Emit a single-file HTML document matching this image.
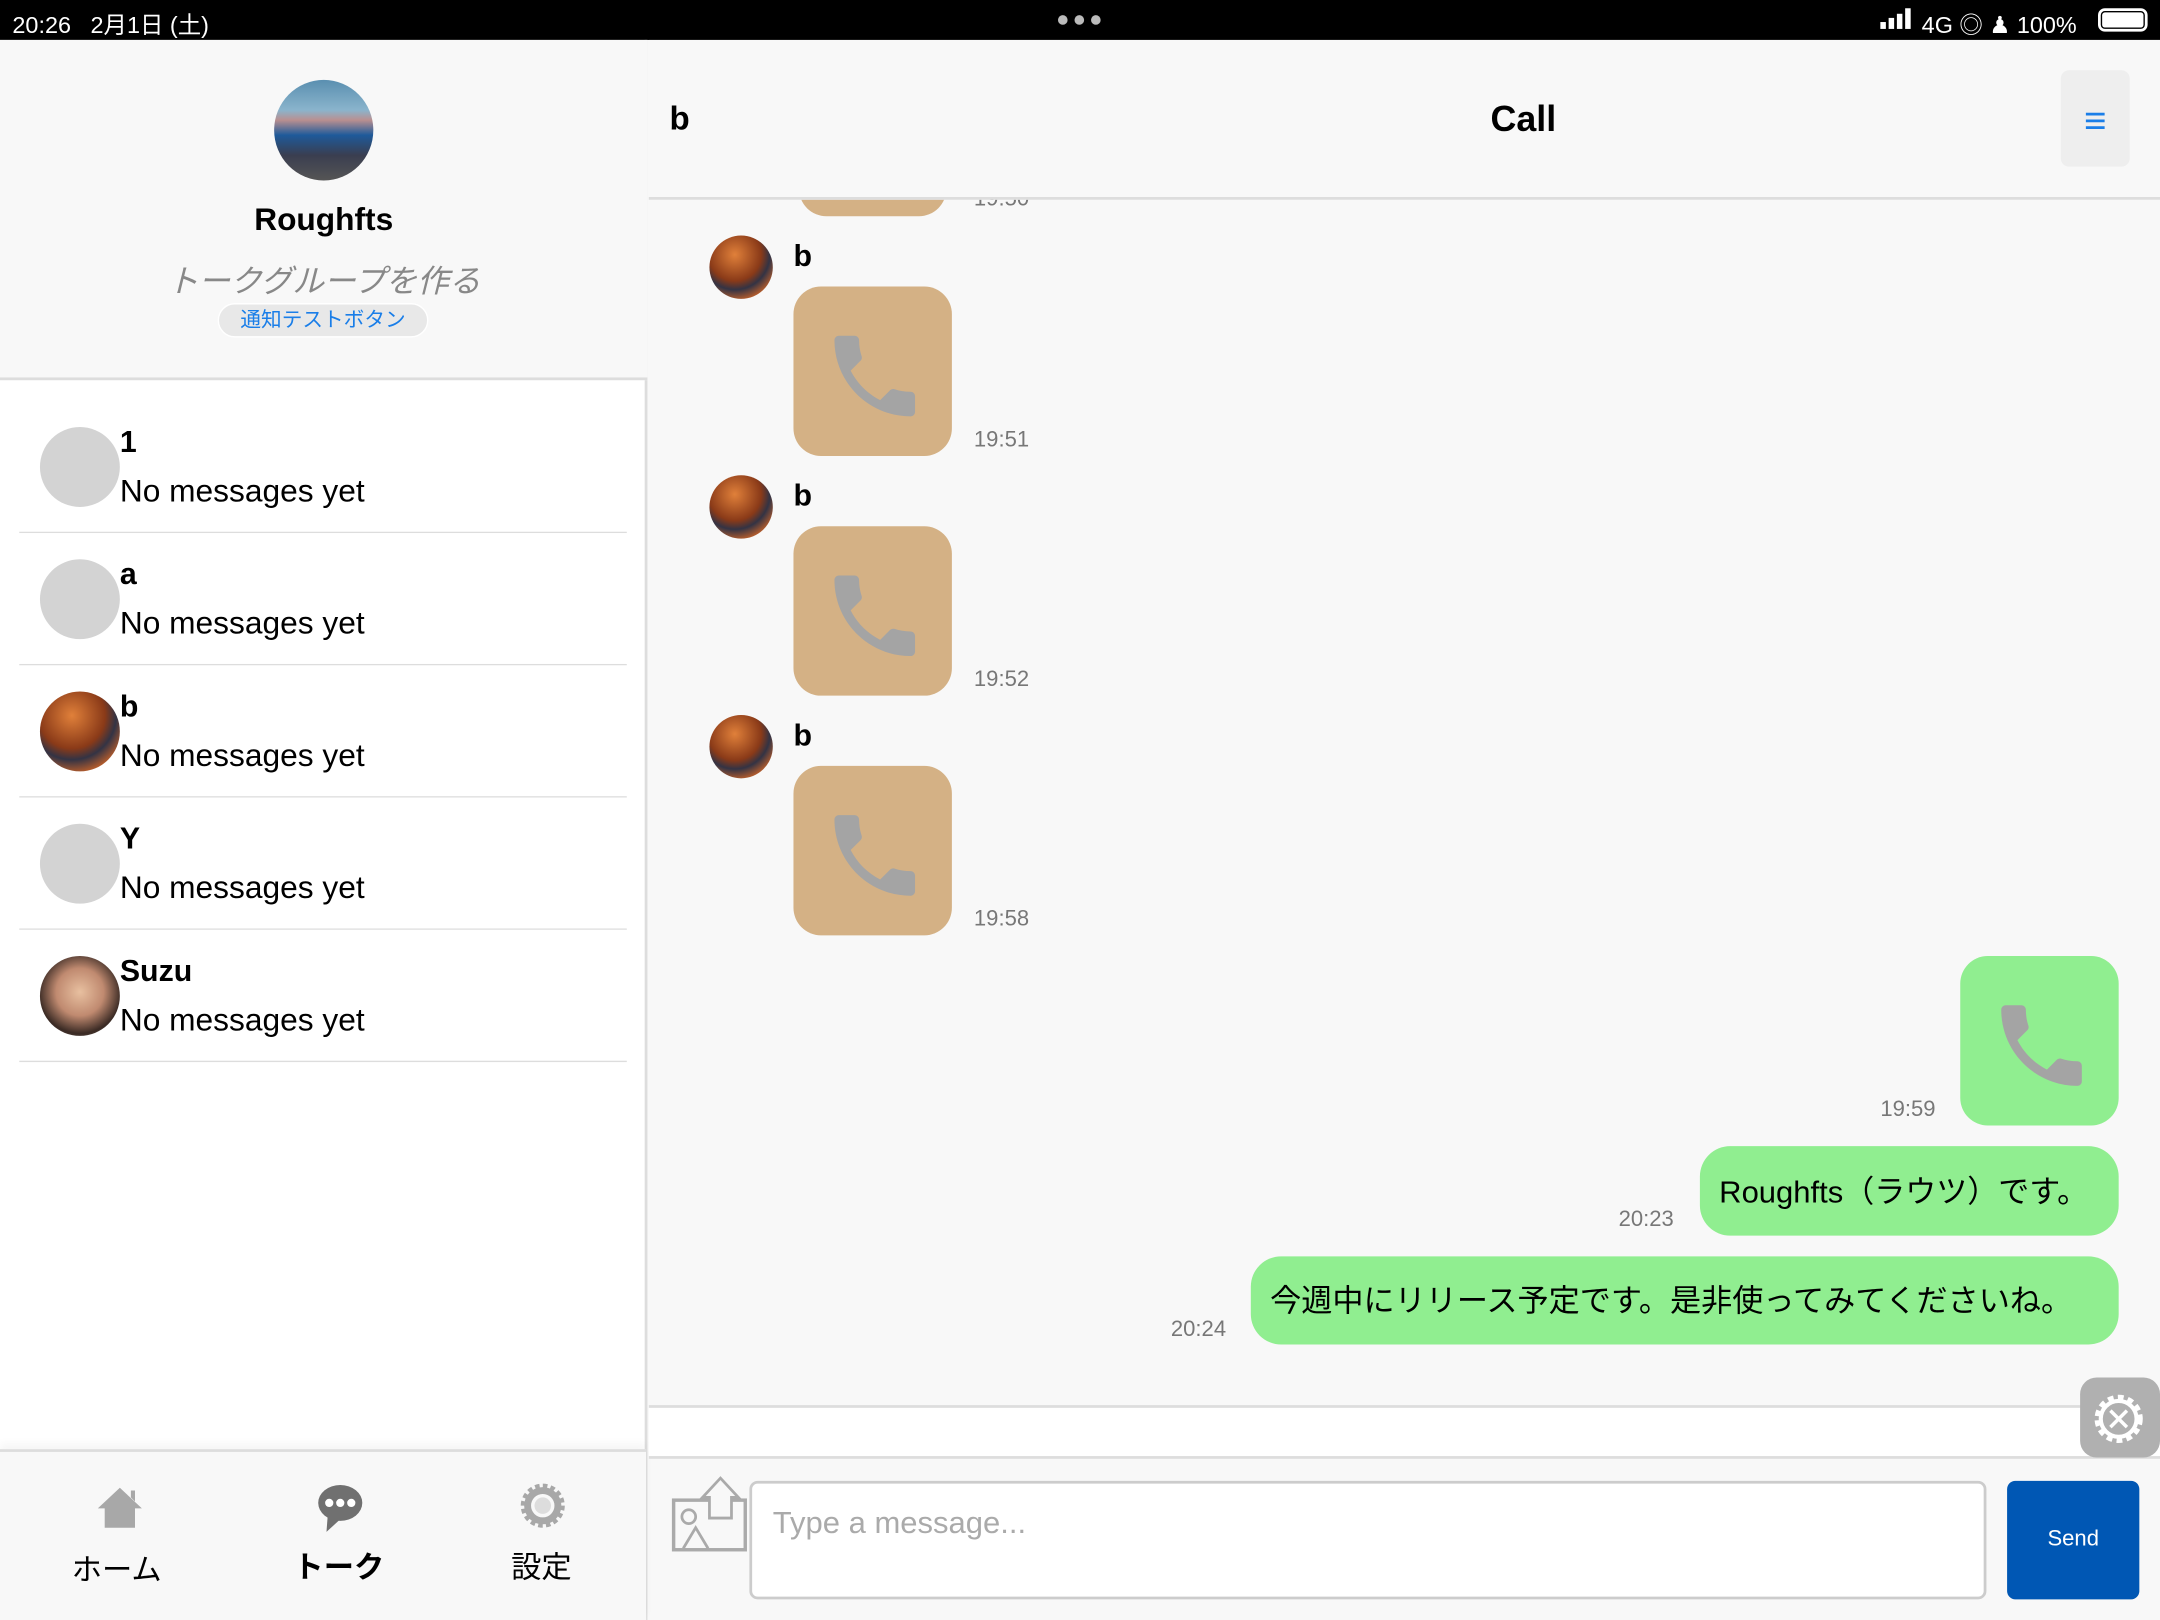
<!DOCTYPE html>
<html><head><meta charset="utf-8"><style>
*{margin:0;padding:0;box-sizing:border-box}
html,body{width:2160px;height:1620px;overflow:hidden;background:#f8f8f8}
#w{position:absolute;left:0;top:0;width:1568px;height:1176px;transform:scale(1.377551);transform-origin:0 0;font-family:"Liberation Sans","Noto Sans CJK JP",sans-serif;background:#f8f8f8}
.a{position:absolute}
.t{white-space:nowrap}
.bub{position:absolute;width:115px;height:123px;border-radius:20px;background:#d4b185}
.bub svg{position:absolute;left:20px;top:26px}
.g{background:#90ee90}
.time{position:absolute;font-size:16px;color:#777}
.av{position:absolute;width:46px;height:46px;border-radius:50%;background:radial-gradient(circle at 40% 30%,#e0803a,#8a3a18 45%,#334 60%,#c0602a 80%,#2a1a10)}
.row{position:absolute;left:14px;width:441px;height:96px;border-bottom:1px solid #ddd;background:#fff}
.row .c{position:absolute;left:15px;top:19px;width:58px;height:58px;border-radius:50%;background:#d3d3d3}
.row .n{position:absolute;left:73px;top:17px;font-size:22px;font-weight:bold}
.row .m{position:absolute;left:73px;top:52px;font-size:23px}
</style></head><body><div id="w">
<div class="a" style="left:0;top:0;width:1568px;height:29px;background:#000"></div>
<div class="a t" style="left:9px;top:4px;color:#fff;font-size:17px">20:26&nbsp;&nbsp;&nbsp;2月1日 (土)</div>
<div class="a" style="left:768px;top:11px;width:7px;height:7px;border-radius:50%;background:#bbb;box-shadow:12px 0 #bbb,24px 0 #bbb"></div>
<div class="a" style="left:1365px;top:16px;width:4px;height:5px;background:#fff"></div>
<div class="a" style="left:1371px;top:13px;width:4px;height:8px;background:#fff"></div>
<div class="a" style="left:1377px;top:10px;width:4px;height:11px;background:#fff"></div>
<div class="a" style="left:1383px;top:6px;width:4px;height:15px;background:#fff"></div>
<div class="a t" style="left:1395px;top:4px;color:#fff;font-size:17px">4G ◎ ♟ 100%</div>
<div class="a" style="left:1523px;top:6px;width:36px;height:17px;border:2px solid #fff;border-radius:5px;padding:1px;background:#000"><div style="background:#fff;width:100%;height:100%;border-radius:2px"></div></div>

<div class="a" style="left:0;top:29px;width:470px;height:1147px;background:#fff;border-right:2px solid #ddd"></div>
<div class="a" style="left:0;top:29px;width:470px;height:247px;background:#f8f8f8;border-bottom:2px solid #ddd"></div>
<div class="a" style="left:199px;top:58px;width:72px;height:73px;border-radius:50%;background:linear-gradient(#5a8fb0 0%,#8ab4cc 30%,#b98f90 40%,#1e5a9a 55%,#3a3e50 75%,#555 100%)"></div>
<div class="a t" style="left:0;width:470px;top:146px;text-align:center;font-size:23px;font-weight:bold">Roughfts</div>
<div class="a t" style="left:0;width:470px;top:185px;text-align:center;font-size:23px;color:#888;font-style:italic">トークグループを作る</div>
<div class="a t" style="left:158px;top:220px;width:153px;height:25px;border-radius:13px;background:#e8e8e8;border:1px solid #fff;color:#1a7ee8;font-size:15px;text-align:center;line-height:23px">通知テストボタン</div>

<div class="row" style="top:291px"><div class="c"></div><div class="n">1</div><div class="m">No messages yet</div></div>
<div class="row" style="top:387px"><div class="c"></div><div class="n">a</div><div class="m">No messages yet</div></div>
<div class="row" style="top:483px"><div class="c" style="background:radial-gradient(circle at 40% 30%,#e0803a,#8a3a18 45%,#334 60%,#c0602a 80%,#2a1a10)"></div><div class="n">b</div><div class="m">No messages yet</div></div>
<div class="row" style="top:579px"><div class="c"></div><div class="n">Y</div><div class="m">No messages yet</div></div>
<div class="row" style="top:675px"><div class="c" style="background:radial-gradient(circle at 50% 45%,#e8c0a0,#c08a70 40%,#3a2a24 70%,#8a7a70)"></div><div class="n">Suzu</div><div class="m">No messages yet</div></div>

<div class="a" style="left:0;top:1052px;width:469px;height:124px;background:#f8f8f8;border-top:2px solid #ddd;box-shadow:0 -4px 6px rgba(0,0,0,.04)"></div>
<svg class="a" style="left:70px;top:1078px" width="34" height="32" viewBox="0 0 34 32"><path d="M17 2 L33 17 H28 V31 H6 V17 H1 Z M25 4 h3 v8 l-3 -3z" fill="#a8a8a8"/></svg>
<div class="a t" style="left:52px;top:1122px;font-size:22px">ホーム</div>
<svg class="a" style="left:230px;top:1077px" width="34" height="36" viewBox="0 0 34 36"><ellipse cx="17" cy="14" rx="16" ry="13" fill="#707070"/><path d="M8 22 L7 35 L18 25z" fill="#707070"/><circle cx="9" cy="14" r="3" fill="#fff"/><circle cx="17" cy="14" r="3" fill="#fff"/><circle cx="25" cy="14" r="3" fill="#fff"/></svg>
<div class="a t" style="left:213px;top:1120px;font-size:22px;font-weight:bold">トーク</div>
<svg class="a" style="left:377px;top:1076px" width="34" height="34" viewBox="0 0 34 34"><circle cx="17" cy="17" r="13" fill="none" stroke="#a8a8a8" stroke-width="6" stroke-dasharray="3 2.1"/><circle cx="17" cy="17" r="11" fill="none" stroke="#a8a8a8" stroke-width="5"/><circle cx="17" cy="17" r="6" fill="#ddd"/></svg>
<div class="a t" style="left:371px;top:1120px;font-size:22px">設定</div>

<div class="a" style="left:471px;top:29px;width:1097px;height:116px;background:#f8f8f8;border-bottom:2px solid #ddd;z-index:2"></div>
<div class="a t" style="left:486px;top:73px;font-size:24px;font-weight:bold;z-index:3">b</div>
<div class="a t" style="left:1082px;top:71px;font-size:26px;font-weight:bold;z-index:3">Call</div>
<div class="a" style="left:1496px;top:51px;width:50px;height:70px;background:#eee;border-radius:6px;z-index:3;color:#1a7ee8;font-size:28px;text-align:center;line-height:74px">≡</div>

<div class="bub" style="left:580px;top:100px;width:107px;height:57px;z-index:1"></div>
<div class="time" style="left:707px;top:136px;z-index:1">19:50</div>

<div class="av" style="left:515px;top:171px"></div>
<div class="a t" style="left:576px;top:173px;font-size:22px;font-weight:bold">b</div>
<div class="bub" style="left:576px;top:208px"><svg width="78" height="78" viewBox="0 0 24 24"><path d="M6.62 10.79c1.44 2.83 3.76 5.14 6.59 6.59l2.2-2.2c.27-.27.67-.36 1.02-.24 1.12.37 2.33.57 3.57.57.55 0 1 .45 1 1V20c0 .55-.45 1-1 1-9.39 0-17-7.61-17-17 0-.55.45-1 1-1h3.5c.55 0 1 .45 1 1 0 1.25.2 2.45.57 3.57.11.35.03.74-.25 1.02l-2.2 2.2z" fill="#a4a4a4"/></svg></div>
<div class="time" style="left:707px;top:311px">19:51</div>

<div class="av" style="left:515px;top:345px"></div>
<div class="a t" style="left:576px;top:347px;font-size:22px;font-weight:bold">b</div>
<div class="bub" style="left:576px;top:382px"><svg width="78" height="78" viewBox="0 0 24 24"><path d="M6.62 10.79c1.44 2.83 3.76 5.14 6.59 6.59l2.2-2.2c.27-.27.67-.36 1.02-.24 1.12.37 2.33.57 3.57.57.55 0 1 .45 1 1V20c0 .55-.45 1-1 1-9.39 0-17-7.61-17-17 0-.55.45-1 1-1h3.5c.55 0 1 .45 1 1 0 1.25.2 2.45.57 3.57.11.35.03.74-.25 1.02l-2.2 2.2z" fill="#a4a4a4"/></svg></div>
<div class="time" style="left:707px;top:485px">19:52</div>

<div class="av" style="left:515px;top:519px"></div>
<div class="a t" style="left:576px;top:521px;font-size:22px;font-weight:bold">b</div>
<div class="bub" style="left:576px;top:556px"><svg width="78" height="78" viewBox="0 0 24 24"><path d="M6.62 10.79c1.44 2.83 3.76 5.14 6.59 6.59l2.2-2.2c.27-.27.67-.36 1.02-.24 1.12.37 2.33.57 3.57.57.55 0 1 .45 1 1V20c0 .55-.45 1-1 1-9.39 0-17-7.61-17-17 0-.55.45-1 1-1h3.5c.55 0 1 .45 1 1 0 1.25.2 2.45.57 3.57.11.35.03.74-.25 1.02l-2.2 2.2z" fill="#a4a4a4"/></svg></div>
<div class="time" style="left:707px;top:659px">19:58</div>

<div class="bub g" style="left:1423px;top:694px"><svg width="78" height="78" viewBox="0 0 24 24"><path d="M6.62 10.79c1.44 2.83 3.76 5.14 6.59 6.59l2.2-2.2c.27-.27.67-.36 1.02-.24 1.12.37 2.33.57 3.57.57.55 0 1 .45 1 1V20c0 .55-.45 1-1 1-9.39 0-17-7.61-17-17 0-.55.45-1 1-1h3.5c.55 0 1 .45 1 1 0 1.25.2 2.45.57 3.57.11.35.03.74-.25 1.02l-2.2 2.2z" fill="#a4a4a4"/></svg></div>
<div class="time" style="left:1365px;top:797px">19:59</div>

<div class="a t" style="left:1234px;top:832px;width:304px;height:65px;border-radius:22px;background:#90ee90;font-size:22.5px;line-height:67px;padding-left:14px">Roughfts（ラウツ）です。</div>
<div class="time" style="left:1175px;top:877px">20:23</div>
<div class="a t" style="left:908px;top:912px;width:630px;height:64px;border-radius:22px;background:#90ee90;font-size:22.6px;line-height:66px;padding-left:14px">今週中にリリース予定です。是非使ってみてくださいね。</div>
<div class="time" style="left:850px;top:957px">20:24</div>

<div class="a" style="left:471px;top:1020px;width:1097px;height:39px;background:#fff;border-top:2px solid #ddd;border-bottom:2px solid #ddd"></div>
<div class="a" style="left:1510px;top:1000px;width:58px;height:58px;border-radius:12px;background:#b0b0b0"></div>
<svg class="a" style="left:1518px;top:1010px" width="40" height="40" viewBox="0 0 40 40"><circle cx="20" cy="20" r="15" fill="none" stroke="#fff" stroke-width="5" stroke-dasharray="4 3"/><circle cx="20" cy="20" r="13" fill="none" stroke="#fff" stroke-width="3"/><path d="M14 14 L26 26 M26 14 L14 26" stroke="#fff" stroke-width="2.5"/></svg>

<svg class="a" style="left:487px;top:1071px" width="56" height="56" viewBox="0 0 56 56"><rect x="2" y="18" width="52" height="36" fill="none" stroke="#aaa" stroke-width="2.5"/><circle cx="13" cy="30" r="5" fill="none" stroke="#aaa" stroke-width="2"/><path d="M9 53 L18 38 L27 53" fill="none" stroke="#aaa" stroke-width="2"/><path d="M28 31 V16 H23 L36 2 L49 16 H44 V31z" fill="#f8f8f8" stroke="#aaa" stroke-width="2"/></svg>
<div class="a" style="left:544px;top:1075px;width:898px;height:86px;background:#fff;border:2px solid #ccc;border-radius:6px"></div>
<div class="a t" style="left:561px;top:1093px;font-size:22.5px;color:#aaa">Type a message...</div>
<div class="a" style="left:1457px;top:1075px;width:96px;height:86px;background:#0057b4;border-radius:6px;color:#fff;font-size:16px;text-align:center;line-height:86px">Send</div>
</div></body></html>
